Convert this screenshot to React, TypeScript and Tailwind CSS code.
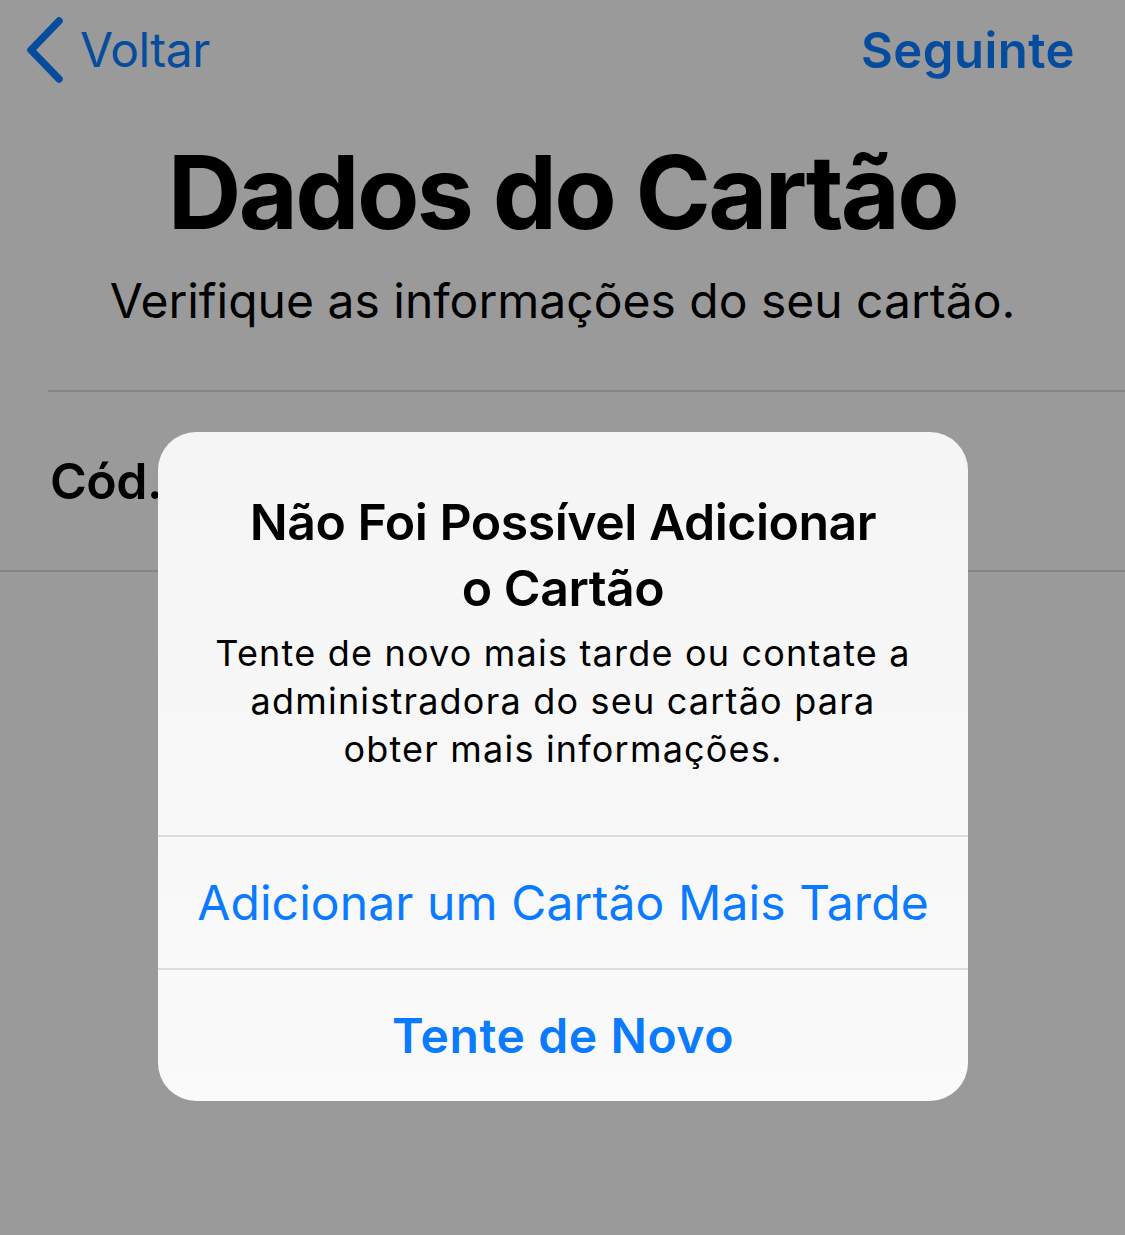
const font = { fontFamily: 'Inter, "Noto Sans", sans-serif' };

function NavBar() {
  return (
    <div className="flex h-[100px] items-center justify-between pl-[22px] pr-[50px]">
      <button className="flex items-center text-[#054c9f]">
        <svg width="44" height="70" viewBox="0 0 44 70" className="mr-[14px]">
          <path d="M37 6 L9 35 L37 64" fill="none" stroke="currentColor" strokeWidth="7.5" strokeLinecap="round" strokeLinejoin="round" />
        </svg>
        <span className="text-[48px] leading-none tracking-[-0.5px]">Voltar</span>
      </button>
      <button className="text-[49px] font-semibold leading-none tracking-[0.5px] text-[#054c9f]">Seguinte</button>
    </div>
  );
}

function Alert() {
  return (
    <div className="absolute left-[158px] top-[432px] flex w-[810px] flex-col overflow-hidden rounded-[38px] bg-gradient-to-b from-[#f5f5f5] to-[#fafafa] text-center">
      <div className="px-[30px] pb-[62px] pt-[57px]">
        <h2 className="text-[50px] font-semibold leading-[66px] tracking-[-0.5px] text-black">
          Não Foi Possível Adicionar
          <br />o Cartão
        </h2>
        <p className="mt-[8px] text-[36px] leading-[48px] tracking-[1.2px] text-black">
          Tente de novo mais tarde ou contate a
          <br />
          administradora do seu cartão para
          <br />
          obter mais informações.
        </p>
      </div>
      <button className="h-[133px] border-t-2 border-[#dcdcdc] text-[48px] leading-none tracking-[0.1px] text-[#0a7aff]">
        Adicionar um Cartão Mais Tarde
      </button>
      <button className="h-[133px] border-t-2 border-[#dcdcdc] text-[48px] font-semibold leading-none tracking-[0.6px] text-[#0a7aff]">
        Tente de Novo
      </button>
    </div>
  );
}

export default function App() {
  return (
    <div className="relative min-h-[1235px] w-full overflow-hidden bg-[#9a9a9a]" style={font}>
      <NavBar />
      <h1 className="mt-[40px] text-center text-[102px] font-bold leading-[104px] tracking-[-2.7px] text-black">
        Dados do Cartão
      </h1>
      <p className="mt-[29px] text-center text-[48px] leading-[56px] tracking-[0px] text-black">
        Verifique as informações do seu cartão.
      </p>
      <div className="ml-[48px] mt-[61px] h-[2px] bg-[#858585]" />
      <div className="flex h-[178px] items-center pl-[50px]">
        <span className="text-[50px] font-semibold tracking-[-0.5px] text-black">Cód.</span>
      </div>
      <div className="h-[2px] bg-[#858585]" />
      <Alert />
    </div>
  );
}
